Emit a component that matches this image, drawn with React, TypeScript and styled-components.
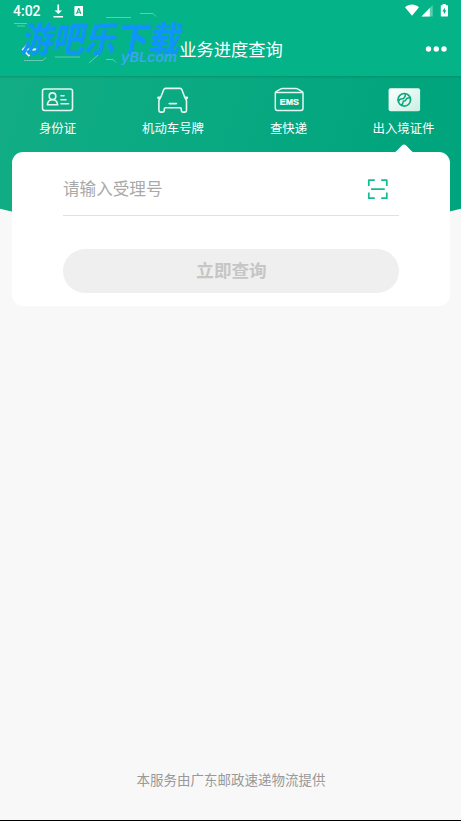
import React from 'react';
import styled, { createGlobalStyle } from 'styled-components';

const GlobalStyle = createGlobalStyle`
  * { box-sizing: border-box; }
  body {
    margin: 0;
    background: #f8f8f8;
    font-family: "Noto Sans CJK SC", "Noto Sans", sans-serif;
  }
`;

const Screen = styled.main`
  width: 461px;
  height: 821px;
  display: flex;
  flex-direction: column;
  background: #f8f8f8;
  border-bottom: 1px solid #000;
  overflow: hidden;
  position: relative;
`;

const Header = styled.header`
  flex: none;
  height: 76px;
  background: #04b388;
  color: #fff;
  display: flex;
  flex-direction: column;
  box-shadow: 0 1px 2px rgba(0, 70, 50, 0.25);
  z-index: 1;
`;

const StatusBar = styled.div`
  height: 22px;
  display: flex;
  align-items: center;
  justify-content: space-between;
  padding: 0 12px 0 13px;
`;

const Clock = styled.span`
  font: 500 14px/22px Roboto, sans-serif;
  width: 40px;
`;

const StatusIcons = styled.div`
  display: flex;
  align-items: center;
  svg { display: block; }
`;

const TitleBar = styled.div`
  height: 54px;
  display: flex;
  align-items: center;
  justify-content: space-between;
  padding: 0 14px 0 20px;
`;

const Title = styled.h1`
  margin: 0 5px 1px 0;
  font-size: 17.3px;
  line-height: 26px;
  font-weight: 400;
`;

const HeaderSide = styled.div<{ $end?: boolean }>`
  width: 60px;
  display: flex;
  justify-content: ${(p) => (p.$end ? 'flex-end' : 'flex-start')};
  svg { display: block; }
`;

const Hero = styled.section`
  flex: none;
  height: 160px;
  background: linear-gradient(110deg, #12ad85 0%, #09a982 45%, #01a57d 80%);
  clip-path: ellipse(418.6px 159px at 50% 0);
`;

const Tabs = styled.nav`
  height: 76px;
  display: grid;
  grid-template-columns: 115px 116px 115px 115px;
  color: #fff;
`;

const Tab = styled.div`
  display: flex;
  flex-direction: column;
  align-items: center;
  padding-top: 8px;
  svg { display: block; height: 32px; }
`;

const TabLabel = styled.span`
  font-size: 12.4px;
  line-height: 20px;
  margin-top: 2px;
  white-space: nowrap;
`;

const Card = styled.section`
  flex: none;
  position: relative;
  width: 438px;
  height: 154px;
  margin: -84px 0 0 12px;
  padding: 0 51px;
  background: #fff;
  border-radius: 11px;
`;

const Pointer = styled.svg`
  position: absolute;
  right: 33px;
  top: -8px;
`;

const Field = styled.div`
  height: 64px;
  border-bottom: 1px solid #e2e2e2;
  display: flex;
  align-items: center;
  justify-content: space-between;
  padding: 10px 10px 0 0;
`;

const Placeholder = styled.span`
  padding-bottom: 2px;
  font-size: 16.6px;
  line-height: 24px;
  color: #a9a9a9;
`;

const Submit = styled.button`
  display: block;
  width: 336px;
  height: 44px;
  margin-top: 33px;
  padding: 0 0 3px 1px;
  border: 0;
  border-radius: 22px;
  background: #efefef;
  color: #c6c6c6;
  font-family: inherit;
  font-size: 17.6px;
  font-weight: 700;
`;

const Footer = styled.footer`
  margin-top: auto;
  padding: 0 0 30px 1px;
  text-align: center;
  font-size: 13.5px;
  line-height: 22px;
  color: #999;
`;

const Watermark = styled.svg`
  position: absolute;
  left: 0;
  top: 0;
  z-index: 2;
  overflow: visible;
  pointer-events: none;
`;

const IdCardIcon = () => (
  <svg width="34" height="32" viewBox="0 0 34 32" fill="none" stroke="#e3f7f0" strokeWidth="1.6" strokeLinecap="round">
    <rect x="1.5" y="5" width="30" height="21.5" rx="2.2" />
    <circle cx="11.500" cy="12.2" r="3.3" />
    <path d="M6.400 20.8c.3-3.4 2-5 5.1-5s4.8 1.6 5.1 5z" />
    <path d="M20 11.7h3M20 15.8h5M20 19.8h7.500" />
  </svg>
);

const CarIcon = () => (
  <svg width="34" height="32" viewBox="0 0 34 32" fill="none" stroke="#e3f7f0" strokeWidth="1.6" strokeLinejoin="round" strokeLinecap="round">
    <path d="M9.500 4.400h14.600c.9 0 1.400.3 1.700 1.100l2.900 7.800h2.600v1l-2 .4M9.500 4.400c-.9 0-1.400.3-1.700 1.100l-3.100 7.800H2.100v1l2 .4M4.100 13.800L2.900 16.600v10c0 1 .4 1.500 1.400 1.500h2.500c1 0 1.500-.5 1.500-1.500v-1.700c0-.8.400-1.200 1.200-1.200h14.600c.8 0 1.200.4 1.200 1.200v1.700c0 1 .5 1.500 1.500 1.500h2.300c1 0 1.400-.5 1.400-1.500v-10l-1.200-2.800M13.200 19.600h7.200" />
  </svg>
);

const EmsIcon = () => (
  <svg width="34" height="32" viewBox="0 0 34 32" fill="none" stroke="#e3f7f0" strokeWidth="1.5" strokeLinejoin="round">
    <path d="M3.300 9v15.300c0 1.400.7 2.100 2.100 2.100h23.500c1.400 0 2.100-.7 2.100-2.100V9c0-.8-.5-1.200-1.200-1.600L25.500 4.900c-.5-.4-1-.5-1.600-.5H10.400c-.6 0-1.100.1-1.600.5L4.500 7.400C3.800 7.800 3.300 8.200 3.300 9z" />
    <path d="M3.700 8.500h27" />
    <text x="17.300" y="20.500" fill="#fff" stroke="#fff" strokeWidth=".2" fontFamily="Liberation Sans, sans-serif" fontWeight="700" fontSize="9" textAnchor="middle" textLength="19" lengthAdjust="spacingAndGlyphs">EMS</text>
  </svg>
);

const PassportIcon = () => (
  <svg width="34" height="32" viewBox="0 0 34 32" fill="none">
    <defs>
      <linearGradient id="passport" x1="0" y1="0" x2="1" y2="1">
        <stop stopColor="#fff" />
        <stop offset="1" stopColor="#c9eee2" />
      </linearGradient>
    </defs>
    <rect x="1.600" y="4.200" width="31.500" height="23" rx="2" fill="url(#passport)" />
    <circle cx="17.300" cy="15.800" r="6.300" stroke="#0ca77e" strokeWidth="1.700" />
    <path d="M18.200 9.800v2.500l-1.700 2.200-3.500.8-1.500 2M23 13.800l-3 .5-1.900 2.500-1.900.5-.7 3-2 .5" stroke="#0ca77e" strokeWidth="1.500" strokeLinejoin="round" />
  </svg>
);

const tabs = [
  { label: '身份证', icon: <IdCardIcon /> },
  { label: '机动车号牌', icon: <CarIcon /> },
  { label: '查快递', icon: <EmsIcon /> },
  { label: '出入境证件', icon: <PassportIcon /> },
];

export default function App() {
  return (
    <>
      <GlobalStyle />
      <Screen>
        <Header>
          <StatusBar>
            <StatusIcons>
              <Clock>4:02</Clock>
              <svg width="34" height="16" viewBox="0 0 34 16" fill="#fff">
                <path d="M4.400 1.500h1.700v6h3L5.300 11 1.500 7.500h2.900zM.5 13h9.500v1.500H.5z" />
                <path fillRule="evenodd" d="M22.300 3h7.700v10h-7.700c-.6 0-.9-.3-.9-.9V3.900c0-.6.3-.9.900-.9zm2.900 2-2.200 6h1.200l.5-1.300h2.100l.5 1.300h1.200l-2.200-6zm.6 1.600.7 2.100h-1.400z" />
              </svg>
            </StatusIcons>
            <StatusIcons>
              <svg width="46" height="18" viewBox="0 0 46 18" fill="#fff">
                <path d="M2 5.200c4.200-3.600 9.800-3.600 14 0L9 13.800z" />
                <path d="M29.700 3v11.500H18.500z" opacity=".35" />
                <path d="M26.800 6v8.500h-8.300z" />
                <path fillRule="evenodd" d="M39.500 2h3.300v1.200h1.700c.3 0 .5.200.5.500v10.300c0 .3-.2.500-.5.500h-6.200c-.3 0-.5-.2-.5-.5V3.700c0-.3.200-.5.500-.5h1.200zM42 5.500l-2.700 4h1.500v3l2.600-4.200h-1.500z" />
              </svg>
            </StatusIcons>
          </StatusBar>
          <TitleBar>
            <HeaderSide>
              <svg width="20" height="18" viewBox="0 0 20 18" fill="none" stroke="#fff" strokeWidth="2">
                <path d="M17 9.500H3.500M9.500 3L3 9.500l6.500 6.500" />
              </svg>
            </HeaderSide>
            <Title>业务进度查询</Title>
            <HeaderSide $end>
              <svg width="22" height="8" viewBox="0 0 22 8" fill="#fff">
                <circle cx="3.500" cy="4" r="2.700" />
                <circle cx="11.300" cy="4" r="2.700" />
                <circle cx="19" cy="4" r="2.700" />
              </svg>
            </HeaderSide>
          </TitleBar>
        </Header>
        <Hero>
          <Tabs>
            {tabs.map((tab) => (
              <Tab key={tab.label}>
                {tab.icon}
                <TabLabel>{tab.label}</TabLabel>
              </Tab>
            ))}
          </Tabs>
        </Hero>
        <Card>
          <Pointer width="26" height="9" viewBox="0 0 26 9" fill="#fff">
            <path d="M0 9c3.500 0 4.500-1 6-2.500l4.800-5c1.500-1.500 2.900-1.500 4.400 0l4.800 5C21.500 8 22.500 9 26 9z" />
          </Pointer>
          <Field>
            <Placeholder>请输入受理号</Placeholder>
            <svg width="22" height="22" viewBox="0 0 22 22" fill="none" stroke="#14bd91" strokeWidth="1.700" strokeLinejoin="round">
              <path d="M1.800 8V2.200h6M14.200 2.200h5.600V8M1.800 14.500v5.700h6M14.200 20.200h5.600v-5.700M4 11.200h13.800" />
            </svg>
          </Field>
          <Submit>立即查询</Submit>
        </Card>
        <Footer>本服务由广东邮政速递物流提供</Footer>
        <Watermark width="190" height="76" viewBox="0 0 190 76">
          <g fill="none" stroke="#a9d8d0" strokeWidth=".8" opacity=".75">
            <path d="M14 23.500h13M17 26h8M106 17.500h25M140 13.500h13l3 3M24 60.500h19l3-3M55 57h25M89 63l9-8M106 59.500h7l3 3" />
          </g>
          <g transform="translate(0 53) skewX(-12)" fill="#1093fb" fontWeight="700" fontFamily="Noto Sans CJK SC, sans-serif">
            <text x="20" y="-1" fontSize="35" textLength="159" lengthAdjust="spacingAndGlyphs">游吧乐下载</text>
          </g>
          <text x="121" y="62" fill="#3aa6f5" fontFamily="Inter, sans-serif" fontStyle="italic" fontWeight="600" fontSize="13" textLength="56" lengthAdjust="spacingAndGlyphs">yBLcom</text>
        </Watermark>
      </Screen>
    </>
  );
}
